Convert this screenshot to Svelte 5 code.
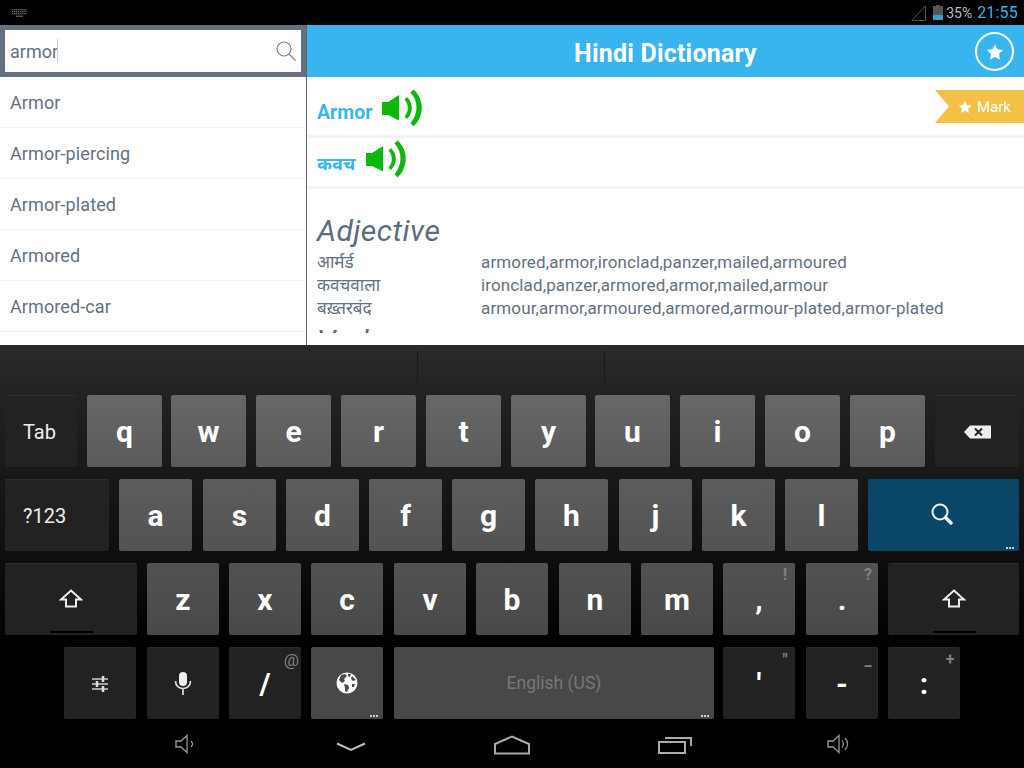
<script>
  const suggestions = ['Armor', 'Armor-piercing', 'Armor-plated', 'Armored', 'Armored-car'];
  const senses = [
    ['आर्मर्ड', 'armored,armor,ironclad,panzer,mailed,armoured'],
    ['कवचवाला', 'ironclad,panzer,armored,armor,mailed,armour'],
    ['बख़्तरबंद', 'armour,armor,armoured,armored,armour-plated,armor-plated']
  ];
  // each key: label, left edge, right edge, kind, hint
  const rows = [
    [['Tab',5,77,'dark txt'],['q',87,162],['w',171,246],['e',256,331],['r',341,416],['t',426,501],['y',511,586],['u',595,670],['i',680,755],['o',765,840],['p',850,925],['@back',935,1019,'dark']],
    [['?123',5,109,'dark txt'],['a',119,192],['s',203,276],['d',286,359],['f',369,442],['g',452,525],['h',535,608],['j',619,692],['k',702,775],['l',785,858],['@search',868,1019,'blue',null,true]],
    [['@shift',5,137,'dark'],['z',147,219],['x',229,301],['c',311,383],['v',394,466],['b',476,548],['n',559,631],['m',641,713],[',',723,795,'',"!"],['.',806,878,'','?'],['@shift',888,1019,'dark']],
    [['@tune',64,136,'dark'],['@mic',147,219,'dark'],['/',229,301,'dark','@'],['@globe',311,383,'',null,true],['English (US)',394,714,'space',null,true],["'",723,795,'dark','"'],['-',806,878,'dark','_'],[':',888,960,'dark','+']]
  ];
  const withGap = (row) => row.map((k, i) => ({
    label: k[0], kind: k[3] || '', hint: k[4], dots: k[5],
    left: k[1] - (i ? row[i - 1][2] : 0), width: k[2] - k[1]
  }));
</script>

{#snippet speaker()}
  <svg class="speaker" width="41" height="38" viewBox="0 0 41 38">
    <path d="M0 13H6L17 6V31.500L6 26H0Z" fill="#0cb80c"/>
    <path d="M25 8C31.500 14 31.500 24 25 30L22.500 27.500C27 22 27 16 22.500 10.500Z" fill="#0cb80c"/>
    <path d="M31.500 .5C42.500 10 42.500 27 31.500 37.500L28.500 34C36.500 25 36.500 12 28.500 3.500Z" fill="#0cb80c"/>
  </svg>
{/snippet}

{#snippet star(size)}
  <svg width={size} height={size} viewBox="0 0 24 24"><path d="M12 1.500L15.300 8.400L22.800 9.400L17.300 14.600L18.700 22.100L12 18.500L5.300 22.100L6.700 14.600L1.200 9.400L8.700 8.400Z" fill="#fff"/></svg>
{/snippet}

{#snippet icon(name)}
  {#if name === '@back'}
    <svg width="27" height="14" viewBox="0 0 27 14"><path d="M0 7L6 .5H27V13.500H6Z" fill="#eee"/><path d="M11 3.500L18 10.500M18 3.500L11 10.500" stroke="#222" stroke-width="2"/></svg>
  {:else if name === '@search'}
    <svg class="lenskey" width="22" height="22" viewBox="0 0 22 22"><circle cx="9" cy="9" r="7.500" fill="none" stroke="#eee" stroke-width="2"/><path d="M14.500 14.500L20 20" stroke="#eee" stroke-width="3.500" stroke-linecap="round"/></svg>
  {:else if name === '@shift'}
    <svg class="up2" width="24" height="19" viewBox="0 0 24 19"><path d="M12 1.500L22 10.500H17V17.500H7V10.500H2Z" fill="none" stroke="#eee" stroke-width="2"/></svg>
    <span class="bar"></span>
  {:else if name === '@tune'}
    <svg width="18" height="18" viewBox="0 0 18 18"><path d="M1 4H17M1 9H17M1 14H17" stroke="#ccc" stroke-width="1.500"/><path d="M12 1V7M6 6V12M12 11V17" stroke="#ddd" stroke-width="2.500"/></svg>
  {:else if name === '@mic'}
    <svg width="18" height="23" viewBox="0 0 18 23"><rect x="5" y="0" width="8" height="14" rx="4" fill="#eee"/><path d="M1.500 9C1.500 19 16.500 19 16.500 9M9 16V23" fill="none" stroke="#ddd" stroke-width="1.700"/></svg>
  {:else if name === '@globe'}
    <svg width="22" height="22" viewBox="0 0 22 22"><circle cx="11" cy="11" r="10.500" fill="#fff"/><path d="M5 3L9 2L11 4L8 7L9 9L6 11L3 8ZM12 2L15 2L14 5L12 4ZM16 4L20 8L17 9L15 7ZM8 12L12 13L13 16L11 20L9 19L9 16ZM16 12L19 12L18 15L16 15Z" fill="#4a4a4a"/></svg>
  {/if}
{/snippet}

<div class="screen">
  <header class="status">
    <svg class="kbd-ic" width="15" height="8" viewBox="0 0 15 8"><path d="M0 .75H15M0 2.750H15M0 4.750H15" stroke="#8a8a8a" stroke-width="1.100" stroke-dasharray="1.300 .6"/><path d="M4 7.200H11" stroke="#777" stroke-width="1"/></svg>
    <div class="status-right">
      <svg width="15" height="16" viewBox="0 0 15 16"><path d="M14.500 .8V15.500H.8Z" fill="none" stroke="#555" stroke-width="1"/></svg>
      <svg class="batt" width="10" height="15" viewBox="0 0 10 15"><path d="M3 0H7V1H10V15H0V1H3Z" fill="#555"/><path d="M0 10H10V15H0Z" fill="#33a3cc"/></svg>
      <span class="pct">35%</span>
      <span class="clock">21:55</span>
    </div>
  </header>

  <main class="app">
    <aside class="left">
      <div class="searchbar">
        <div class="input">
          <span class="query">armor</span><span class="caret"></span>
          <svg class="lens" width="20" height="20" viewBox="0 0 20 20"><circle cx="8" cy="8" r="7" fill="none" stroke="#7b8794" stroke-width="1.200"/><path d="M13 13L19.500 19.500" stroke="#7b8794" stroke-width="1.300"/></svg>
        </div>
      </div>
      <ul class="list">
        {#each suggestions as s}<li>{s}</li>{/each}
        <li></li>
      </ul>
    </aside>
    <section class="right">
      <div class="title">
        <h1>Hindi Dictionary</h1>
        <span class="fav">{@render star(18)}</span>
      </div>
      <div class="word first">
        <span class="w">Armor</span>{@render speaker()}
        <span class="mark">{@render star(14)}<span>Mark</span></span>
      </div>
      <div class="word second"><span class="w">कवच</span>{@render speaker()}</div>
      <div class="defs">
        <h2>Adjective</h2>
        {#each senses as [hi, en]}
          <div class="sense"><span class="hi">{hi}</span><span>{en}</span></div>
        {/each}
        <h2 class="verb">Verb</h2>
      </div>
    </section>
  </main>

  <section class="keyboard">
    <div class="strip"><i></i><i></i></div>
    <div class="rows">
      {#each rows as row, r}
        <div class="row">
          {#each withGap(row) as k}
            <div class="key r{r} {k.kind}" style="margin-left:{k.left}px;width:{k.width}px">
              {#if k.label.startsWith('@')}
                {@render icon(k.label)}
              {:else}
                <span class="lbl">{k.label}</span>
              {/if}
              {#if k.hint}<span class="hint" class:wide={k.hint === '@'}>{k.hint}</span>{/if}
              {#if k.dots}<span class="dots"><b></b><b></b><b></b></span>{/if}
            </div>
          {/each}
        </div>
      {/each}
    </div>
    <nav class="nav">
      <svg class="n1" width="20" height="20" viewBox="0 0 20 20"><path d="M1 7H6L12 1.500V18.500L6 13H1Z" fill="none" stroke="#999" stroke-width="1.300"/><path d="M16 7C18 9 18 11 16 13" fill="none" stroke="#999" stroke-width="1.200"/></svg>
      <svg class="n2" width="30" height="10" viewBox="0 0 30 10"><path d="M1 1.500L15 8L29 1.500" fill="none" stroke="#bbb" stroke-width="2"/></svg>
      <svg class="n3" width="36" height="20" viewBox="0 0 36 20"><path d="M1 9L18 1.500L35 9V18.500H1Z" fill="none" stroke="#aaa" stroke-width="2"/></svg>
      <svg class="n4" width="34" height="18" viewBox="0 0 34 18"><rect x="1" y="6" width="26" height="11" fill="none" stroke="#aaa" stroke-width="2"/><path d="M7 2H33V10" fill="none" stroke="#aaa" stroke-width="2"/></svg>
      <svg class="n5" width="22" height="20" viewBox="0 0 22 20"><path d="M1 7H6L12 1.500V18.500L6 13H1Z" fill="none" stroke="#999" stroke-width="1.300"/><path d="M15 6.500C17 9 17 11 15 13.500M18 4C21.500 8 21.500 12 18 16" fill="none" stroke="#999" stroke-width="1.200"/></svg>
    </nav>
  </section>
</div>

<style>
  :global(body) { margin: 0; background: #000; }
  .screen { width: 1024px; height: 768px; display: flex; flex-direction: column; overflow: hidden; font-family: Roboto, "Noto Sans", "Noto Sans Devanagari", sans-serif; }

  .status { height: 25px; flex: none; background: #000; display: flex; align-items: center; justify-content: space-between; padding: 0 6px 0 12px; box-sizing: border-box; }
  .kbd-ic { margin-top: 0; }
  .status-right { display: flex; align-items: center; }
  .batt { margin-left: 7px; }
  .pct { margin-left: 3px; font-size: 14px; color: #bbb; width: 31px; }
  .clock { font-size: 16px; color: #33b5e5; letter-spacing: .2px; }

  .app { height: 320px; flex: none; display: flex; background: #fff; }
  .left { width: 306px; flex: none; border-right: 1px solid #666; overflow: hidden; }
  .searchbar { height: 52px; box-sizing: border-box; padding: 5px; background: #647181; }
  .input { height: 42px; background: #fff; display: flex; align-items: center; padding: 0 5px; position: relative; }
  .query { font-size: 18px; color: #647181; }
  .caret { width: 1px; height: 24px; margin-left: -1px; background: #c9ced4; }
  .lens { position: absolute; right: 5px; top: 11px; }
  .list { list-style: none; margin: 0; padding: 0; }
  .list li { height: 50px; line-height: 52px; padding-left: 10px; font-size: 18px; color: #647181; border-bottom: 1px solid #f2f2f2; letter-spacing: .1px; }

  .right { flex: 1; min-width: 0; display: flex; flex-direction: column; }
  .title { height: 52px; flex: none; background: #38b4ee; display: flex; align-items: center; justify-content: center; position: relative; }
  h1 { margin: 0; font-size: 25px; font-weight: 700; color: #fff; position: relative; top: 2px; letter-spacing: .2px; }
  .fav { position: absolute; right: 10px; top: 7px; width: 35px; height: 35px; border: 2px solid #fff; border-radius: 50%; display: flex; align-items: center; justify-content: center; }
  .word { box-sizing: border-box; flex: none; position: relative; display: flex; align-items: flex-start; padding-left: 10px; border-bottom: 3px solid #f3f3f3; }
  .first { height: 61px; padding-top: 12px; }
  .second { height: 51px; padding-top: 2px; }
  .w { font-size: 19.500px; font-weight: 700; color: #38b4ee; line-height: 24px; }
  .first .w { margin-top: 12px; }
  .second .w { margin-top: 12px; font-size: 18px; }
  .speaker { margin-left: 9.500px; }
  .second .speaker { margin-left: 11px; }
  .mark { position: absolute; right: 0; top: 13px; width: 89px; height: 33px; background: #f3c145; clip-path: polygon(0 0, 100% 0, 100% 100%, 0 100%, 14px 50%); display: flex; align-items: center; gap: 5px; padding-left: 23px; box-sizing: border-box; font-size: 15px; color: #fff; }
  .defs { height: 144px; flex: none; overflow: hidden; padding-left: 10px; box-sizing: border-box; color: #647181; }
  h2 { margin: 24px 0 2px; font-size: 30px; font-weight: 400; font-style: italic; line-height: 36px; color: #5d6d7e; letter-spacing: .5px; }
  .sense { display: flex; font-size: 17px; line-height: 23px; letter-spacing: .13px; }
  .hi { width: 164px; flex: none; letter-spacing: 0; }
  .verb { margin-top: 3px; }

  .keyboard { flex: 1; display: flex; flex-direction: column; background: linear-gradient(#2a2a2a 0, #222 12%, #0e0e0e 50%, #000 72%); }
  .strip { height: 50px; flex: none; display: flex; padding-top: 6px; box-sizing: border-box; }
  .strip i { width: 1px; height: 32px; background: #1a1a1a; margin-left: 417px; }
  .strip i + i { margin-left: 186px; }
  .rows { display: flex; flex-direction: column; gap: 12px; }
  .row { display: flex; height: 72px; }
  .key { flex: none; height: 72px; box-sizing: border-box; border-radius: 2px; position: relative; display: flex; align-items: center; justify-content: center; color: #fff; }
  .lbl { font-size: 30px; font-weight: 700; line-height: 1; margin-top: 1px; }
  .r0 { background: linear-gradient(#676767, #5b5b5b); }
  .r1 { background: linear-gradient(#5c5c5c, #535353); }
  .r2 { background: linear-gradient(#525252, #494949); }
  .r3 { background: #484848; }
  .key.dark { background: #222; border-top: 1px solid #2c2c2c; }
  .key.blue { background: #0a4767; }
  .key.txt { justify-content: flex-start; padding-left: 18px; }
  .key.txt .lbl { font-size: 20px; font-weight: 400; color: #eee; margin-top: 0; }
  .key.space .lbl { font-size: 17.500px; font-weight: 400; color: #777; }
  .hint { position: absolute; right: 5px; top: 3px; min-width: 10px; text-align: center; font-size: 16px; font-weight: 700; color: #808080; line-height: 18px; }
  .hint.wide { right: 2px; font-weight: 400; font-size: 17px; }
  .dots { position: absolute; right: 5px; bottom: 2px; display: flex; gap: 1px; }
  .dots b { width: 2px; height: 2px; background: #ccc; }
  .bar { position: absolute; bottom: 2px; left: 50%; width: 43px; margin-left: -21px; height: 2px; background: #000; }
  .lenskey { margin: -3px 3px 0 0; }
  .up2 { margin-top: -2px; }

  .nav { flex: 1; position: relative; }
  .nav svg { position: absolute; }
  .n1 { left: 175px; top: 15px; }
  .n2 { left: 336px; top: 23px; }
  .n3 { left: 494px; top: 16px; }
  .n4 { left: 658px; top: 17px; }
  .n5 { left: 827px; top: 15px; }
</style>
